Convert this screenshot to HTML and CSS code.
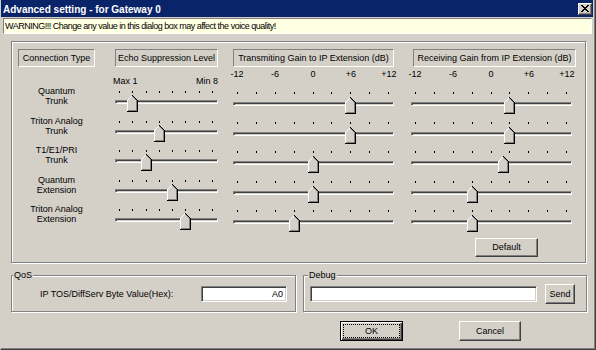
FILE: index.html
```html
<!DOCTYPE html>
<html lang="en">
<head>
  <meta charset="UTF-8" />
  <meta name="viewport" content="width=device-width,initial-scale=1.0" />
  <title>Advanced setting</title>
  <link rel="stylesheet" href="styles.css">
</head>
<body>
  <div class="dialog">
    <div class="titlebar">
      <span>Advanced setting - for Gateway 0</span>
      <button class="close" aria-label="Close">
        <svg width="8" height="7" viewBox="0 0 8 7" shape-rendering="crispEdges">
          <path d="M0 0h2v1h1v1h2V1h1V0h2v1H7v1H6v1H5v1h1v1h1v1h1v1H6V6H5V5H3v1H2v1H0V6h1V5h1V4h1V3H2V2H1V1H0z" fill="#000"/>
        </svg>
      </button>
    </div>

    <div class="warning">WARNING!!! Change any value in this dialog box may affect the voice quality!</div>

    <div class="group main">
      <div class="grid" id="grid">
        <div class="hdr c1">Connection Type</div>
        <div class="hdr c2">Echo Suppression Level</div>
        <div class="hdr c3">Transmiting Gain to IP Extension (dB)</div>
        <div class="hdr c4">Receiving Gain from IP Extension (dB)</div>

        <div class="scale echo c2"><span>Max 1</span><span>Min 8</span></div>
        <div class="scale gain c3"><span>-12</span><span>-6</span><span>0</span><span>+6</span><span>+12</span></div>
        <div class="scale gain c4"><span>-12</span><span>-6</span><span>0</span><span>+6</span><span>+12</span></div>
      </div>
      <div class="defrow">
        <button class="btn btn-default">Default</button>
      </div>
    </div>

    <div class="bottom">
      <div class="group qos">
        <span class="legend">QoS</span>
        <label for="tos">IP TOS/DiffServ Byte Value(Hex):</label>
        <input id="tos" class="field tos" type="text" value="A0" />
      </div>
      <div class="group debug">
        <span class="legend">Debug</span>
        <input class="field dbg" type="text" />
        <button class="btn btn-send">Send</button>
      </div>
    </div>

    <div class="actions">
      <button class="btn btn-ok">OK</button>
      <button class="btn btn-cancel">Cancel</button>
    </div>
  </div>

  <script>
    // name, echo (1..8), transmit dB, receive dB
    const rows = [
      ["Quantum<br>Trunk", 2, 6, 3],
      ["Triton Analog<br>Trunk", 4, 6, 3],
      ["T1/E1/PRI<br>Trunk", 3, 0, 2],
      ["Quantum<br>Extension", 5, 0, -3],
      ["Triton Analog<br>Extension", 6, -3, -3]
    ];

    const thumbSvg = `<svg width="11" height="17" viewBox="0 0 11 17" shape-rendering="crispEdges">
      <path d="M0 5L5 0h1l5 5v12H0z" fill="#d4d0c8"/>
      <path d="M0.5 16V5.5L5.5 0.5" fill="none" stroke="#fff"/>
      <path d="M5.5 0.5L10.5 5.5V16.5H0" fill="none" stroke="#000"/>
      <path d="M5.5 1.5L9.5 5.5V15.5H1" fill="none" stroke="#808080"/>
    </svg>`;

    function slider(cls, ticks, pct){
      let t = "";
      for(let i=0;i<ticks;i++) t += "<i></i>";
      return `<div class="slider ${cls}">
        <div class="ticks">${t}</div>
        <div class="track"></div>
        <div class="rail"><div class="thumb" style="left:calc(${pct}% - 5px)">${thumbSvg}</div></div>
      </div>`;
    }

    const grid = document.getElementById("grid");
    rows.forEach(r=>{
      const [name, echo, tx, rx] = r;
      grid.insertAdjacentHTML("beforeend",
        `<div class="rlabel c1">${name}</div>` +
        slider("echo c2", 8, (echo-1)/7*100) +
        slider("gain c3", 9, (tx+12)/24*100) +
        slider("gain c4", 9, (rx+12)/24*100));
    });
  </script>
</body>
</html>
```

FILE: styles.css
```css
* { box-sizing: border-box; }

body {
  margin: 0;
  background: #d4d0c8;
  font-family: "Liberation Sans", Arial, sans-serif;
  font-size: 9px;
  color: #000;
}

.dialog {
  width: 596px;
  height: 350px;
  background: #d4d0c8;
  border-left: 1px solid #d4d0c8;
  border-right: 1px solid #404040;
  border-bottom: 1px solid #404040;
  box-shadow: inset -1px -1px #808080;
  padding-right: 2px;
}

.titlebar {
  height: 17px;
  background: #0a246a;
  color: #fff;
  font-weight: bold;
  font-size: 10px;
  display: flex;
  align-items: center;
  justify-content: space-between;
  padding: 1px 1px 0 2px;
}

.close {
  width: 14px;
  height: 12px;
  padding: 0;
  margin-top: -1px;
  background: #d4d0c8;
  border: 1px solid;
  border-color: #fff #404040 #404040 #fff;
  box-shadow: inset -1px -1px #808080;
  display: flex;
  align-items: center;
  justify-content: center;
}

.warning {
  margin: 1px 1px 0 2px;
  height: 16px;
  background: #ffffe1;
  border: 1px solid;
  border-color: #808080 #fff #fff #808080;
  padding-left: 1px;
  line-height: 14px;
  font-family: "Liberation Sans Narrow", "Liberation Sans", Arial, sans-serif;
  letter-spacing: -0.5px;
  white-space: nowrap;
  overflow: hidden;
}

/* etched group box */
.group {
  position: relative;
  border: 1px solid #808080;
  box-shadow: inset 1px 1px #fff, 1px 1px #fff;
}

.main {
  margin: 7px 0 0 10px;
  width: 575px;
  height: 222px;
  padding: 7px 0 0 6px;
}

.grid {
  display: grid;
  grid-template-columns: 77px 20px 103px 15px 161px 17px 165px;
  grid-template-rows: 18px 19px repeat(5, 29.5px);
}

.c1 { grid-column: 1; }
.c2 { grid-column: 3; }
.c3 { grid-column: 5; }
.c4 { grid-column: 7; }

.hdr {
  border: 1px solid;
  border-color: #808080 #fff #fff #808080;
  text-align: center;
  line-height: 16px;
  white-space: nowrap;
}
.hdr.c4 { margin-left: 2px; }

.scale {
  display: flex;
  justify-content: space-between;
  line-height: 11px;
  white-space: nowrap;
}
.scale.echo { align-self: end; margin: 0 0 -1px -2px; }
.scale.gain { align-self: start; margin: 2px 0 0 -6px; width: 172px; }
.scale.gain span { width: 20px; text-align: center; }

.rlabel {
  text-align: center;
  line-height: 10px;
  white-space: nowrap;
}

.slider {
  position: relative;
  padding-top: 5px;
}
.slider.echo { width: 103px; }
.slider.gain { width: 161px; padding-top: 6px; }

.ticks {
  display: flex;
  justify-content: space-between;
  margin: 0 5px 0 4px;
  height: 2px;
}
.ticks i {
  width: 1px;
  height: 2px;
  background: #000;
}

.track {
  margin-top: 7px;
  height: 4px;
  border: 1px solid;
  border-color: #808080 #fff #fff #808080;
  box-shadow: inset 1px 1px #404040;
}
.gain .track { margin-top: 8px; }

.rail {
  position: absolute;
  left: 4px;
  right: 6px;
  top: 9px;
  height: 17px;
}
.gain .rail { top: 11px; }

.thumb {
  position: absolute;
  top: 0;
  width: 11px;
  height: 17px;
}
.thumb svg { display: block; }

.defrow {
  display: flex;
  justify-content: flex-end;
  padding: 4px 47px 0 0;
}

.btn {
  font-family: "Liberation Sans", Arial, sans-serif;
  font-size: 9px;
  color: #000;
  background: #d4d0c8;
  border: 1px solid;
  border-color: #fff #404040 #404040 #fff;
  box-shadow: inset -1px -1px #808080;
  padding: 0;
}

.btn-default { width: 63px; height: 19px; }

.bottom {
  display: flex;
  gap: 7px;
  margin: 12px 0 0 10px;
}

.qos, .debug {
  height: 37px;
  display: flex;
  align-items: center;
  padding-top: 1px;
}
.qos {
  width: 285px;
  justify-content: space-between;
  padding-left: 28px;
  padding-right: 8px;
}
.debug {
  width: 284px;
  gap: 8px;
  padding-left: 6px;
}

.legend {
  position: absolute;
  top: -6px;
  left: 1px;
  padding: 0 1px;
  line-height: 11px;
  background: #d4d0c8;
}
.debug .legend { left: 4px; }

.field {
  height: 16px;
  border: 1px solid;
  border-color: #808080 #fff #fff #808080;
  box-shadow: inset 1px 1px #404040, inset -1px -1px #d4d0c8;
  background: #fff;
  font-family: "Liberation Sans", Arial, sans-serif;
  font-size: 9px;
  padding: 0 3px;
  outline: none;
}
.tos { width: 86px; text-align: right; }
.dbg { width: 227px; }

.btn-send { width: 30px; height: 20px; }

.actions {
  display: flex;
  justify-content: flex-end;
  gap: 56px;
  margin-top: 9px;
  padding-right: 72px;
}

.btn-ok, .btn-cancel { width: 63px; height: 20px; }
.btn-cancel { width: 62px; }

.btn-ok {
  border: 1px solid #000;
  box-shadow: inset 1px 1px #fff, inset -1px -1px #404040, inset -2px -2px #808080;
  outline: 1px dotted #000;
  outline-offset: -4px;
}
```
